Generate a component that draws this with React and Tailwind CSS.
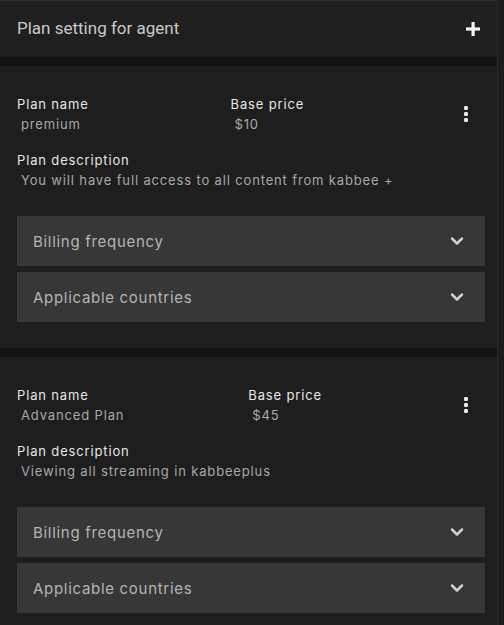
import React from "react";

const Chevron = () => (
  <svg width="20" height="20" viewBox="0 0 24 24" fill="none" stroke="#d0d0d0" strokeWidth="3" strokeLinecap="round" strokeLinejoin="round">
    <path d="m6 9 6 6 6-6" />
  </svg>
);

const Dots = () => (
  <svg width="6" height="18" viewBox="0 0 6 18" fill="#e8e8e8">
    <rect x="1" y="1" width="4" height="4" rx="1.2" />
    <rect x="1" y="7" width="4" height="4" rx="1.2" />
    <rect x="1" y="13" width="4" height="4" rx="1.2" />
  </svg>
);

const Plus = () => (
  <svg width="14" height="14" viewBox="0 0 14 14" fill="#f2f2f2">
    <rect x="5.5" y="0" width="3.2" height="14" />
    <rect x="0" y="5.4" width="14" height="3.2" />
  </svg>
);

function Accordion({ title }) {
  return (
    <div className="h-[50px] bg-[#373737] flex items-center justify-between pl-4 pr-[18px]">
      <span className="text-[15px] text-[#b4b4b4] tracking-[0.7px] pt-[2px]">{title}</span>
      <Chevron />
    </div>
  );
}

function PlanCard({ name, price, desc }) {
  return (
    <div className="bg-[#1e1e1e] pt-[28px] pb-[26px] px-[17px] pr-[12px] tracking-[0.85px]">
      <div className="flex items-center">
        <div className="flex-auto flex flex-col">
          <span className="text-[13px] leading-5 text-[#e6e6e6]">Plan name</span>
          <span className="text-[13px] leading-5 text-[#a8a8a8] pl-1">{name}</span>
        </div>
        <div className="flex-auto flex flex-col">
          <span className="text-[13px] leading-5 text-[#e6e6e6]">Base price</span>
          <span className="text-[13px] leading-5 text-[#a8a8a8] pl-1">{price}</span>
        </div>
        <div className="w-[39px] flex justify-center">
          <Dots />
        </div>
      </div>
      <div className="flex flex-col mt-4">
        <span className="text-[13px] leading-5 text-[#e6e6e6]">Plan description</span>
        <span className="text-[13px] leading-5 text-[#a8a8a8] pl-1">{desc}</span>
      </div>
      <div className="mt-[26px] flex flex-col gap-[6px]">
        <Accordion title="Billing frequency" />
        <Accordion title="Applicable countries" />
      </div>
    </div>
  );
}

export default function App() {
  return (
    <div className="w-[504px] h-[625px] overflow-hidden bg-[#1a1a1a] flex" style={{ fontFamily: "Inter, 'Noto Sans', sans-serif" }}>
      <div className="w-[497px] flex flex-col bg-[#131313]">
        <div className="h-[57px] bg-[#1f1f1f] border-t border-[#2c2c2c] flex items-center justify-between pl-[17px] pr-[17px] shrink-0">
          <span className="text-[17px] text-[#c8c8c8]" style={{ fontFamily: "Roboto, sans-serif" }}>Plan setting for agent</span>
          <Plus />
        </div>
        <div className="h-[9px] shrink-0" />
        <PlanCard name="premium" price="$10" desc="You will have full access to all content from kabbee +" />
        <div className="h-[9px] shrink-0" />
        <PlanCard name="Advanced Plan" price="$45" desc="Viewing all streaming in kabbeeplus" />
      </div>
      <div className="flex-1 bg-[#1c1c1c] border-l border-[#2a2a2a]" />
    </div>
  );
}
